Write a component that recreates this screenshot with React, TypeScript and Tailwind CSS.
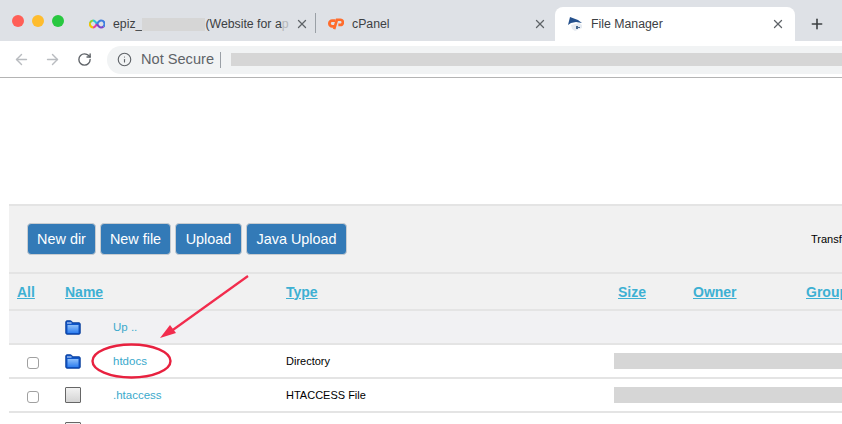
import { ArrowLeft, ArrowRight, Info, Plus, RotateCw, X } from "lucide-react"

function InfinityLogo() {
  return (
    <svg width="16" height="10" viewBox="0 0 16 10" fill="none" strokeWidth="2.200">
      <path d="M8 5C6.500 2.500 5.500 1.500 4 1.500" stroke="#2fc4d8" />
      <path d="M4 1.500a3.500 3.500 0 0 0-3 2.500" stroke="#8fd03a" />
      <path d="M1 4a3.500 3.500 0 0 0 3 4.500" stroke="#f2c200" />
      <path d="M4 8.500c1.500 0 2.500-1 4-3.500" stroke="#e8409a" />
      <path d="M8 5c1.500 2.500 2.500 3.500 4 3.500a3.500 3.500 0 0 0 2.500-1" stroke="#7a45c8" />
      <path d="M14.500 7.500a3.500 3.500 0 0 0-2.500-6C10.500 1.500 9.500 2.500 8 5" stroke="#3f7fe0" />
    </svg>
  )
}

function CpanelLogo() {
  return (
    <svg width="17" height="12" viewBox="0 0 17 12" fill="none">
      <path d="M8 2.500H4.500a3 3 0 0 0 0 6H7" stroke="#ff6c2c" strokeWidth="3" />
      <path d="M6.500 11.500 9.500 1.500h3.500a2.600 2.600 0 0 1 0 5.500h-2" stroke="#ff6c2c" strokeWidth="2.800" />
    </svg>
  )
}

function ManagerLogo() {
  return (
    <svg width="16" height="16" viewBox="0 0 16 16">
      <path d="M1 9 3 1l8 3 4 3-6-1-5 1z" fill="#24508c" />
      <path d="M4 9l8-2 3 2v3l-7 3-3-2z" fill="#e6ebf1" />
      <path d="M9 10h2v3H9zM11 11h2v1h-2z" fill="#4a6a90" />
    </svg>
  )
}

function Folder() {
  return (
    <svg width="16" height="15" viewBox="0 0 16 15">
      <defs>
        <linearGradient id="folderFront" x1="0" y1="0" x2="0" y2="1">
          <stop offset="0" stopColor="#8fc0fa" />
          <stop offset="1" stopColor="#2f7ff0" />
        </linearGradient>
      </defs>
      <path d="M.8 13V2q0-1.200 1.200-1.200h3.500q1 0 1.500 1l.5 1h6.500q1.200 0 1.200 1.200v9q0 1.200-1.200 1.200H2q-1.200 0-1.200-1.200z" fill="#0f55c8" stroke="#0b3f9a" strokeWidth="1" />
      <path d="M2 3h4.500" stroke="#d8e8ff" strokeWidth="1" />
      <rect x="2.500" y="5" width="11" height="8" fill="url(#folderFront)" />
    </svg>
  )
}

function FileIcon() {
  return <div className="w-4 h-[16px] rounded-[1px] border border-[#666] bg-gradient-to-b from-[#f2f2f2] to-[#d4d4d4]" />
}

function Tab({ logo, title, pad, right, w, divider }: { logo: React.ReactNode; title: React.ReactNode; pad: string; right: string; w: string; divider?: boolean }) {
  return (
    <div className={`flex items-center h-[34px] ${w} ${pad} shrink-0 relative`}>
      <div className="w-[16px] flex justify-center shrink-0">{logo}</div>
      <div className="ml-[8px] text-[12.3px] text-[#3c4043] whitespace-nowrap overflow-hidden flex-1">{title}</div>
      <X size={14} className={`text-[#5f6368] ${right} shrink-0`} strokeWidth={2.2} />
      {divider && <div className="absolute right-[0px] top-[6px] h-[20px] w-px bg-[#9aa0a6]" />}
    </div>
  )
}

function Btn({ label, w }: { label: string; w: string }) {
  return (
    <button className={`h-[32px] ${w} shrink-0 pt-[1px] rounded-[4px] bg-[#337ab7] border border-[#c8ccd0] text-white text-[14.4px]`}>
      {label}
    </button>
  )
}

function HeadLink({ label, w }: { label: string; w: string }) {
  return <div className={`${w} shrink-0 text-[14px] font-bold text-[#3db0d3] underline`}>{label}</div>
}

function Row({ icon, name, type, up, check }: { icon: React.ReactNode; name: string; type?: string; up?: boolean; check?: boolean }) {
  return (
    <div className={`flex items-center h-[34px] border-b-2 border-[#e4e4e4] ${up ? "bg-[#f1f1f3]" : "bg-white"} whitespace-nowrap`}>
      <div className="w-[56px] shrink-0 pl-[18px]">
        {check && <div className="mt-[3px] w-[12px] h-[12px] rounded-[3px] border border-[#a0a0a0] bg-white" />}
      </div>
      <div className="w-[48px] shrink-0">{icon}</div>
      <div className="w-[173px] shrink-0 pt-[1px] text-[11.5px] text-[#3aa9cc]">{name}</div>
      <div className="w-[328px] shrink-0 text-[11px] text-black">{type}</div>
      {check && <div className="flex-1 h-[16px] bg-[#d6d6d6]" />}
    </div>
  )
}

export default function App() {
  return (
    <div className="relative w-[842px] h-[424px] overflow-hidden bg-white font-['Liberation_Sans',sans-serif]">
      {/* tab strip */}
      <div className="flex items-end h-[41px] bg-[#dee1e6]">
        <div className="flex items-center gap-[8px] w-[87px] pl-[12px] self-stretch shrink-0">
          <span className="w-[12px] h-[12px] rounded-full bg-[#ff5f57]" />
          <span className="w-[12px] h-[12px] rounded-full bg-[#febc2e]" />
          <span className="w-[12px] h-[12px] rounded-full bg-[#28c840]" />
        </div>
        <Tab
          divider
          w="w-[229px]"
          pad="pl-[2px]"
          right="mr-[7px]"
          logo={<InfinityLogo />}
          title={
            <span className="flex items-center">
              epiz_<span className="inline-block w-[63px] h-[13px] bg-[#d6d6d6]" />(Website for a<span className="text-[#b5b7ba]">p</span>
            </span>
          }
        />
        <Tab w="w-[239px]" pad="pl-[12px]" right="mr-[8px]" logo={<CpanelLogo />} title="cPanel" />
        <div className="flex items-center h-[34px] w-[240px] shrink-0 pl-[12px] bg-white rounded-t-[8px]">
          <ManagerLogo />
          <div className="ml-[8px] flex-1 text-[12.3px] text-[#3c4043]">File Manager</div>
          <X size={14} className="text-[#5f6368] mr-[10px]" strokeWidth={2.2} />
        </div>
        <div className="flex-1 h-[34px] flex items-center pl-[14px]">
          <Plus size={16} className="text-[#3c4043]" strokeWidth={2.4} />
        </div>
      </div>

      {/* address bar */}
      <div className="flex items-center h-[37px] border-b border-[#b4b4b4] pt-[1px] bg-white">
        <ArrowLeft size={17} className="ml-[13px] text-[#b9bcc0]" strokeWidth={2} />
        <ArrowRight size={17} className="ml-[14px] text-[#b9bcc0]" strokeWidth={2} />
        <RotateCw size={15} className="ml-[16px] text-[#5f6368]" strokeWidth={2.2} />
        <div className="flex items-center ml-[15px] flex-1 h-[28px] rounded-l-full bg-[#f1f3f4]">
          <Info size={15} className="ml-[10px] text-[#5f6368]" strokeWidth={1.8} />
          <span className="ml-[9px] text-[14.6px] text-[#5f6368]">Not Secure</span>
          <div className="ml-[6px] w-px h-[16px] bg-[#9aa0a6]" />
          <div className="ml-[10px] flex-1 h-[13px] bg-[#d6d6d6]" />
        </div>
      </div>

      {/* file manager panel */}
      <div className="mt-[126px] ml-[9px]">
        <div className="flex items-center h-[70px] pl-[18px] gap-[4px] border-y-2 border-[#e4e4e4] bg-[#f1f1f1]">
          <Btn label="New dir" w="w-[69px]" />
          <Btn label="New file" w="w-[71px]" />
          <Btn label="Upload" w="w-[67px]" />
          <Btn label="Java Upload" w="w-[101px]" />
          <span className="ml-[460px] text-[11px] text-black whitespace-nowrap">Transfer</span>
        </div>
        <div className="flex items-center h-[37px] pl-[8px] pt-[1px] border-b-2 border-[#e4e4e4] bg-[#f1f1f1] whitespace-nowrap">
          <HeadLink label="All" w="w-[48px]" />
          <HeadLink label="Name" w="w-[221px]" />
          <HeadLink label="Type" w="w-[332px]" />
          <HeadLink label="Size" w="w-[75px]" />
          <HeadLink label="Owner" w="w-[113px]" />
          <HeadLink label="Group" w="w-[60px]" />
        </div>
        <Row up icon={<Folder />} name="Up .." />
        <Row check icon={<Folder />} name="htdocs" type="Directory" />
        <Row check icon={<FileIcon />} name=".htaccess" type="HTACCESS File" />
        <div className="pt-[9px] pl-[56px]">
          <FileIcon />
        </div>
      </div>

      {/* red annotation over the table */}
      <svg className="absolute left-0 top-0 pointer-events-none" width="842" height="424" fill="none">
        <path d="M248 276 170 332" stroke="#f22c4d" strokeWidth="2.200" />
        <path d="M160 338 170 325 176 333z" fill="#f22c4d" />
        <ellipse cx="131.500" cy="361" rx="39" ry="16.500" stroke="#e8213f" strokeWidth="2.400" />
      </svg>
    </div>
  )
}
